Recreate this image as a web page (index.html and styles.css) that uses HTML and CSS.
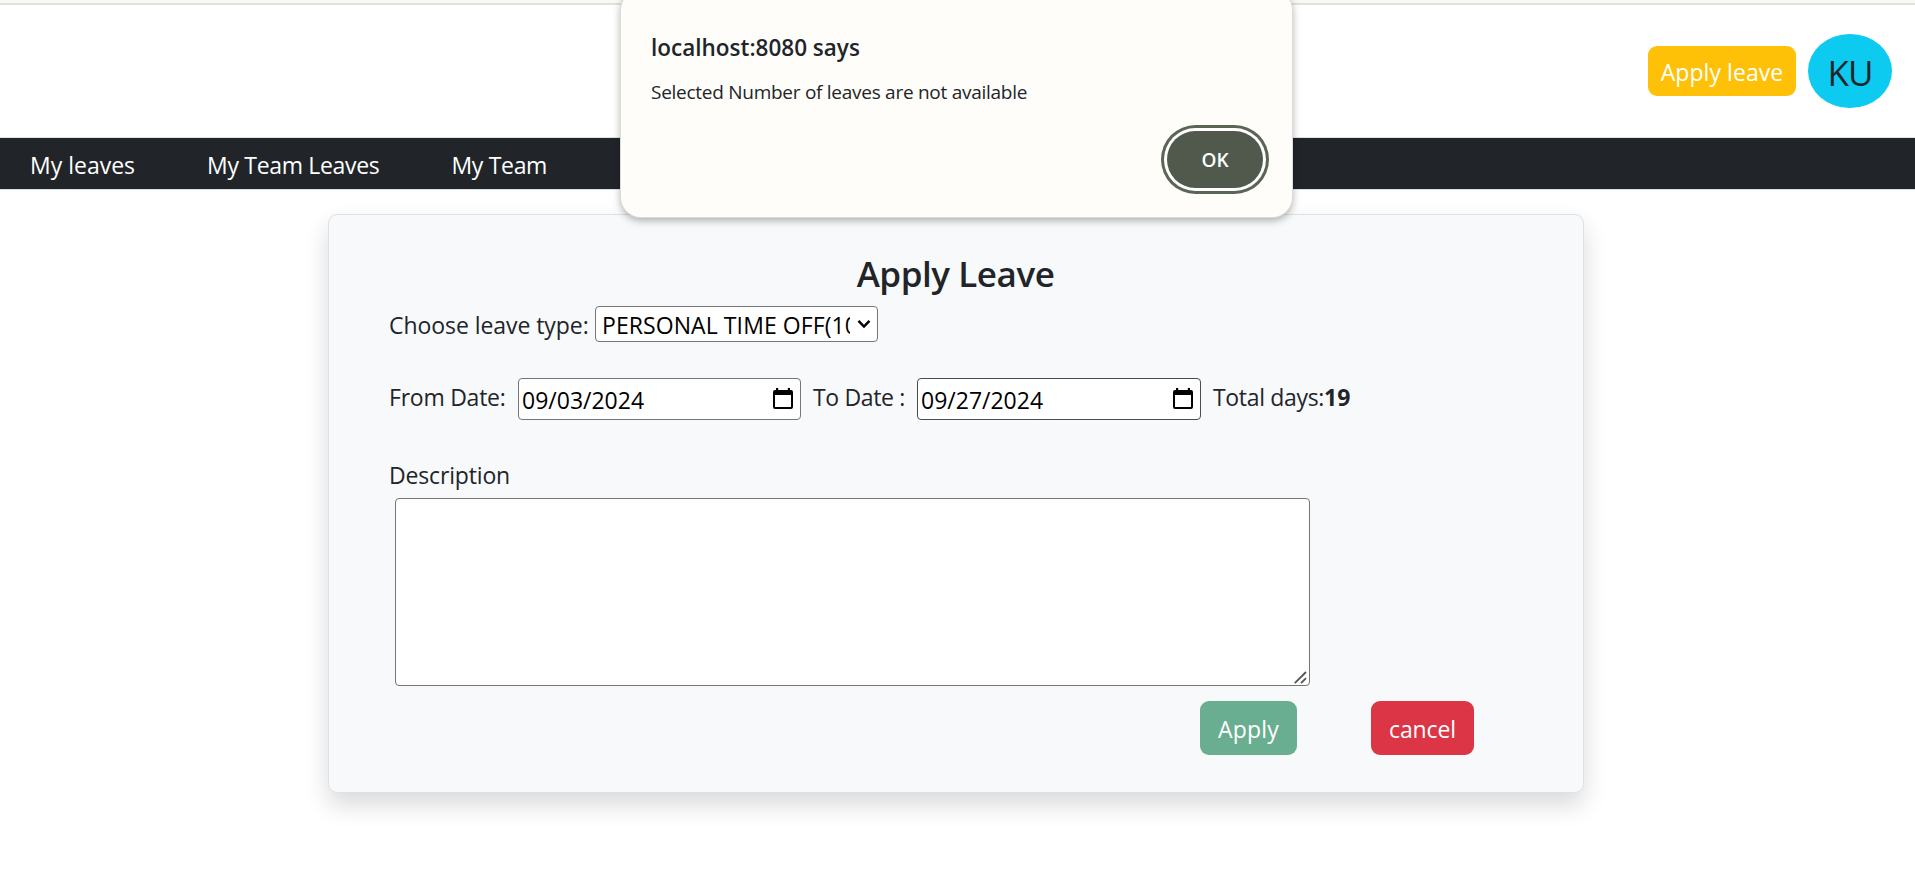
FILE: index.html
```html
<!DOCTYPE html>
<html lang="en">
<head>
<meta charset="utf-8">
<title>Apply Leave</title>
<link rel="stylesheet" href="styles.css">
</head>
<body>
<div class="browser-edge"></div>
<header class="topbar">
  <button class="btn btn-warning">Apply leave</button>
  <div class="avatar">KU</div>
</header>
<nav class="nav">
  <a class="nav-link">My leaves</a>
  <a class="nav-link nav-tight">My Team Leaves</a>
  <a class="nav-link nav-tight">My Team</a>
</nav>
<main class="card">
  <h2 class="title">Apply Leave</h2>
  <div class="row row-type">
    <label class="label-type">Choose leave type:</label>
    <div class="select">
      <div class="select-text">PERSONAL TIME OFF(10)</div>
      <svg class="chevron" width="14" height="10" viewBox="0 0 14 10"><path d="M1.500 1.800 7 7.500l5.500-5.700" fill="none" stroke="#000" stroke-width="2.400"/></svg>
    </div>
  </div>
  <div class="row row-dates">
    <label class="label-from">From Date:</label>
    <div class="date">09/03/2024
      <svg class="cal" width="20" height="21" viewBox="0 0 20 21"><path fill="#000" fill-rule="evenodd" d="M3 0h2.200v2h9.600V0H17v2h1a2 2 0 0 1 2 2v15a2 2 0 0 1-2 2H2a2 2 0 0 1-2-2V4a2 2 0 0 1 2-2h1zM2 7v12h16V7z"/></svg>
    </div>
    <label class="label-to">To Date :</label>
    <div class="date date-hover">09/27/2024
      <svg class="cal" width="20" height="21" viewBox="0 0 20 21"><path fill="#000" fill-rule="evenodd" d="M3 0h2.200v2h9.600V0H17v2h1a2 2 0 0 1 2 2v15a2 2 0 0 1-2 2H2a2 2 0 0 1-2-2V4a2 2 0 0 1 2-2h1zM2 7v12h16V7z"/></svg>
    </div>
    <div class="total">Total days:<b>19</b></div>
  </div>
  <div class="row row-desc"><label class="label-desc">Description</label></div>
  <div class="area">
    <svg class="grip" width="13" height="13" viewBox="0 0 13 13"><path d="M.8 12.200 12 1M7 12.200l5-5" fill="none" stroke="#555" stroke-width="1.800"/></svg>
  </div>
  <div class="actions">
    <button class="btn btn-success">Apply</button>
    <button class="btn btn-danger">cancel</button>
  </div>
</main>
<div class="dialog">
  <div class="dialog-title">localhost:8080 says</div>
  <div class="dialog-msg">Selected Number of leaves are not available</div>
  <button class="ok">OK</button>
</div>
</body>
</html>
```
FILE: styles.css
```css
* { box-sizing: border-box; }
body {
  margin: 0;
  height: 875px;
  overflow: hidden;
  background: #fff;
  color: #212529;
  font: 23px/36px "Open Sans", "Noto Sans", sans-serif;
  white-space: nowrap;
}
button { font: inherit; border: 0; padding: 0; }
.browser-edge { height: 5px; background: #f9f8f4; border-bottom: 2px solid #e1e1dc; }
.topbar {
  display: flex;
  justify-content: flex-end;
  align-items: center;
  gap: 12px;
  height: 132px;
  padding-right: 23px;
}
.btn { display: flex; align-items: center; justify-content: center; padding-top: 2px; border-radius: 9px; color: #fff; }
.btn-warning { width: 148px; height: 50px; background: #ffc107; letter-spacing: .05px; }
.avatar {
  display: flex; align-items: center; justify-content: center;
  width: 84px; height: 74px;
  padding-top: 4px;
  border-radius: 50%;
  background: #0dcaf0;
  font-size: 35px;
  letter-spacing: -1px;
}
.nav {
  display: flex;
  gap: 72px;
  height: 53px;
  padding: 9px 30px 0;
  background: #212529;
  border-top: 1px solid #dee2e6;
  border-bottom: 1px solid #dee2e6;
  color: #fff;
}
.nav-tight { letter-spacing: -.32px; }
.card {
  width: 1256px;
  height: 579px;
  margin: 24px 0 0 328px;
  padding: 35px 61px 0 60px;
  background: #f8f9fb;
  border: 1px solid #dee2e6;
  border-radius: 9px;
  box-shadow: 0 12px 24px rgba(0, 0, 0, .15);
}
.title { margin: 0; height: 56px; font-size: 35px; font-weight: 600; line-height: 48px; letter-spacing: -.45px; text-align: center; }
.row { display: flex; }
.row-type { height: 72px; }
.label-type { width: 206px; padding-top: 1px; letter-spacing: -.06px; }
.select {
  display: flex;
  align-items: center;
  width: 283px; height: 36px;
  padding: 0 6px;
  background: #fff;
  border: 1px solid #767676;
  border-radius: 4px;
  color: #000;
}
.select-text { width: 249px; padding-top: 1px; overflow: hidden; letter-spacing: .08px; }
.chevron { margin-left: 7px; }
.row-dates { height: 78px; }
.label-from { width: 129px; padding-top: 1px; letter-spacing: -.24px; }
.date {
  display: flex; align-items: center; justify-content: space-between;
  width: 283px; height: 42px;
  padding: 1px 7px 0 3px;
  background: #fff;
  border: 1px solid #767676;
  border-radius: 4px;
  color: #000;
}
.cal { margin-top: -2px; }
.date-hover { width: 284px; border-color: #4c4c4c; }
.label-to { width: 116px; padding: 1px 0 0 12px; letter-spacing: -.34px; }
.total { padding: 1px 0 0 12px; letter-spacing: -.33px; }
.total b { letter-spacing: 0; }
.row-desc { height: 42px; }
.label-desc { padding-top: 1px; letter-spacing: -.16px; }
.area {
  display: flex; align-items: flex-end; justify-content: flex-end;
  width: 915px; height: 188px;
  margin-left: 6px;
  padding: 1px 2px;
  background: #fff;
  border: 1px solid #767676;
  border-radius: 4px;
}
.actions { display: flex; justify-content: flex-end; gap: 74px; padding: 15px 48px 0 0; }
.btn-success { width: 97px; height: 54px; background: #69ae90; letter-spacing: .2px; }
.btn-danger { width: 103px; height: 54px; background: #dc3545; letter-spacing: -.1px; }
.dialog {
  position: absolute;
  left: 621px; top: -10px;
  width: 671px; height: 227px;
  padding: 40px 23px 0 30px;
  background: #fefdf9;
  border-radius: 20px;
  box-shadow: 0 0 0 1px #dcdcd9, 0 3px 8px rgba(0, 0, 0, .35);
}
.dialog-title { font-size: 22.500px; font-weight: 600; }
.dialog-msg { font-size: 19px; margin-top: 8px; letter-spacing: -.27px; }
.ok {
  display: flex; align-items: center; justify-content: center;
  width: 96px; height: 57px;
  margin: 21px 6px 0 auto;
  border-radius: 29px;
  background: #50594b;
  box-shadow: 0 0 0 3px #fff, 0 0 0 6px #5a6555;
  color: #fff;
  font-size: 19px;
  font-weight: 600;
}
```
